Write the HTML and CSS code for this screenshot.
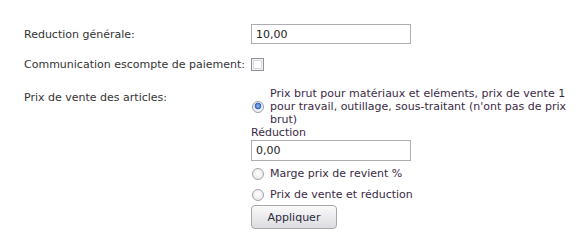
FILE: index.html
```html
<!DOCTYPE html>
<html lang="fr">
<head>
    <meta charset="UTF-8">
    <title>Prix de vente</title>
    <link rel="stylesheet" href="styles.css">
</head>
<body>
    <div class="form">
        <div class="row">
            <label class="caption" for="reduction">Reduction générale:</label>
            <div class="field">
                <input type="text" id="reduction" class="text-input" value="10,00">
            </div>
        </div>

        <div class="row">
            <label class="caption" for="escompte">Communication escompte de paiement:</label>
            <div class="field">
                <input type="checkbox" id="escompte" class="check">
            </div>
        </div>

        <div class="row row-top">
            <div class="caption caption-top">Prix de vente des articles:</div>
            <div class="field options">
                <label class="option option-long">
                    <input type="radio" name="prix" class="radio" checked>
                    <span>Prix brut pour matériaux et eléments, prix de vente 1 pour travail, outillage, sous-traitant (n'ont pas de prix brut)</span>
                </label>
                <div class="sub-label">Réduction</div>
                <input type="text" class="text-input" value="0,00">
                <label class="option">
                    <input type="radio" name="prix" class="radio">
                    <span>Marge prix de revient %</span>
                </label>
                <label class="option">
                    <input type="radio" name="prix" class="radio">
                    <span>Prix de vente et réduction</span>
                </label>
                <button class="button">Appliquer</button>
            </div>
        </div>
    </div>
</body>
</html>
```

FILE: styles.css
```css
body {
    margin: 0;
    background-color: #fff;
    font-family: "DejaVu Sans", Verdana, sans-serif;
    font-size: 11px;
    color: #333;
}

.form {
    padding: 24px 0 0 24px;
}

.row {
    display: grid;
    grid-template-columns: 227px 320px;
    align-items: center;
    margin-bottom: 14px;
}

.row-top {
    align-items: start;
    margin-top: 16px;
}

.caption-top {
    padding-top: 4px;
}

.field {
    display: flex;
    align-items: center;
}

.options {
    flex-direction: column;
    align-items: flex-start;
}

.text-input {
    box-sizing: border-box;
    width: 160px;
    height: 20px;
    margin: 0;
    padding: 0 4px;
    border: 1px solid #abadb3;
    font-family: inherit;
    font-size: 11px;
    color: #222;
}

.check {
    appearance: none;
    box-sizing: border-box;
    width: 13px;
    height: 13px;
    margin: 0;
    border: 1px solid #8f8f9d;
    box-shadow: inset 0 0 0 1px #f4f4f4, inset 0 0 0 2px #d8d8de;
    background: #fff;
}

.option {
    display: flex;
    align-items: center;
    gap: 5px;
    width: 320px;
    color: #3b2a44;
    line-height: 13px;
}

.option-long span {
    width: 302px;
}

.radio {
    appearance: none;
    box-sizing: border-box;
    flex: none;
    width: 12px;
    height: 12px;
    margin: 0 1px 0 1px;
    border: 1px solid #a2a2a8;
    border-radius: 50%;
    background: radial-gradient(circle at 50% 40%, #ffffff 0, #e4e4e8 100%);
}

.radio:checked {
    background: radial-gradient(circle at 50% 40%, #9ec3f5 0, #3d6fc9 2.5px, #3a66b8 3.2px, #e8ecf4 3.6px, #f4f4f8 100%);
}

.option + .option {
    margin-top: 8px;
}

.options .text-input {
    height: 21px;
    margin-top: 1px;
    margin-bottom: 6px;
}

.sub-label {
    color: #3b2a44;
    line-height: 13px;
}

.button {
    box-sizing: border-box;
    width: 86px;
    height: 24px;
    margin-top: 4px;
    border: 1px solid #a7a7ab;
    border-radius: 4px;
    background: linear-gradient(#fafafa, #ebebee 50%, #dcdce0);
    font-family: inherit;
    font-size: 11px;
    color: #2a2a3a;
}
```
